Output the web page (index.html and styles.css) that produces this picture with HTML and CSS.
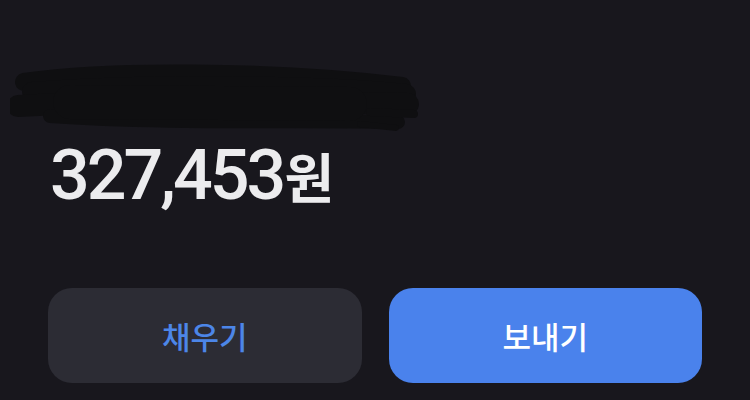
FILE: index.html
```html
<!DOCTYPE html>
<html lang="ko">
<head>
<meta charset="utf-8">
<link rel="stylesheet" href="styles.css">
</head>
<body>
<main class="screen">
  <svg class="redact" width="410" height="70" viewBox="0 0 410 70" aria-hidden="true">
    <g fill="none" stroke="#0f0f11" stroke-linecap="round" stroke-linejoin="round">
      <path d="M14 20 C 90 8, 260 8, 392 24" stroke-width="18"/>
      <path d="M22 30 C 120 22, 300 22, 396 32" stroke-width="20"/>
      <path d="M8 44 C 120 38, 300 40, 398 42" stroke-width="22"/>
      <path d="M40 54 C 150 62, 300 58, 388 60" stroke-width="14"/>
      <path d="M360 50 L 404 52" stroke-width="8"/>
      <path d="M350 62 L 386 66" stroke-width="6"/>
      <path d="M60 40 L 340 42" stroke-width="34"/>
    </g>
  </svg>
  <div class="amount">327,453<span class="unit">원</span></div>
  <div class="actions">
    <button class="btn btn-fill">채우기</button>
    <button class="btn btn-send">보내기</button>
  </div>
</main>
</body>
</html>
```

FILE: styles.css
```css
html, body {
  margin: 0;
  padding: 0;
  background: #18171d;
}
.screen {
  width: 750px;
  height: 400px;
  box-sizing: border-box;
  padding: 62px 48px 0 48px;
  display: flex;
  flex-direction: column;
  font-family: "Noto Sans", "Noto Sans CJK KR", sans-serif;
}
.redact {
  display: block;
  margin-left: -38px;
}
.amount {
  margin-top: 2px;
  font-family: Roboto, "Noto Sans CJK KR", sans-serif;
  font-weight: 500;
  font-size: 70px;
  line-height: 82px;
  letter-spacing: -3px;
  color: #ececee;
  padding-left: 2px;
}
.unit {
  font-family: "Noto Sans CJK KR", sans-serif;
  font-weight: 600;
  font-size: 54px;
  letter-spacing: 0;
  margin-left: 1px;
}
.actions {
  margin-top: 71px;
  display: flex;
  gap: 27px;
}
.btn {
  flex: 1;
  height: 95px;
  border: none;
  border-radius: 24px;
  font-family: "Noto Sans CJK KR", sans-serif;
  font-weight: 500;
  font-size: 31px;
  padding: 0;
}
.btn-fill {
  background: #2c2c34;
  color: #4c86e8;
}
.btn-send {
  background: #4a82ec;
  color: #ffffff;
}
```
